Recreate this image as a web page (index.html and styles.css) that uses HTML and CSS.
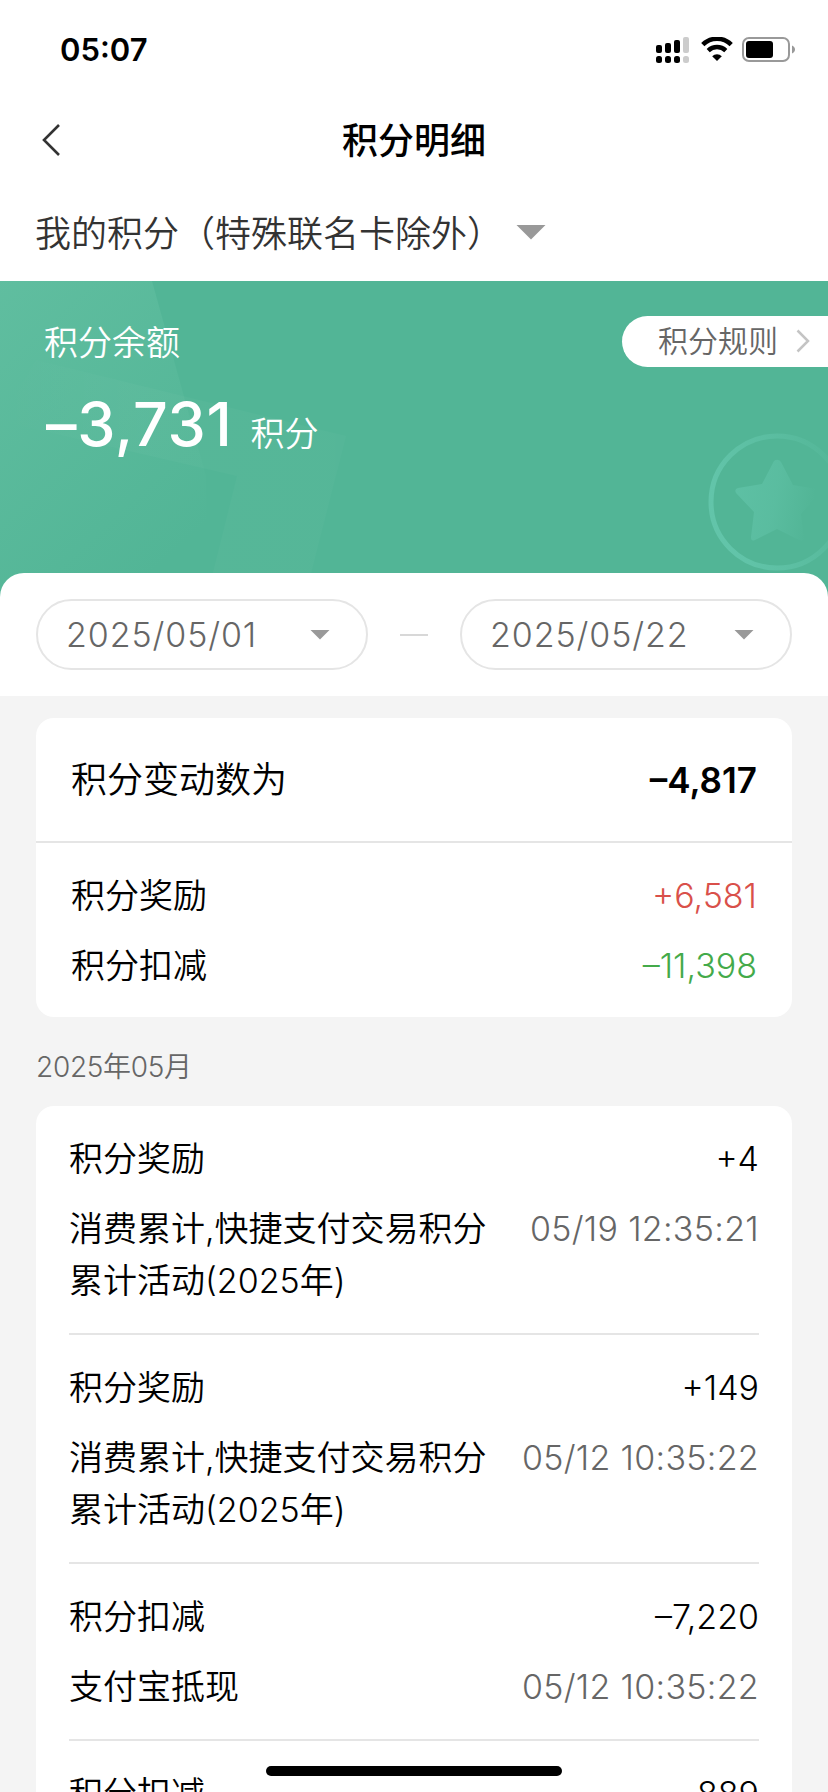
FILE: index.html
```
<!DOCTYPE html>
<html lang="zh-CN">
<head>
  <meta charset="UTF-8">
  <meta name="viewport" content="width=device-width, initial-scale=1">
  <title>积分明细</title>
  <link rel="stylesheet" href="styles.css">
</head>
<body>
  <div class="status-bar">
    <span class="time">05:07</span>
    <div class="status-icons">
      <svg class="signal" width="34" height="26" viewBox="0 0 34 26">
        <rect x="0" y="8" width="6" height="8" rx="2"/>
        <rect x="9" y="6" width="6" height="10" rx="2"/>
        <rect x="18" y="3" width="6" height="13" rx="2"/>
        <rect x="27" y="0" width="6" height="16" rx="2" fill="#ccc"/>
        <rect x="0" y="19" width="6" height="7" rx="2.5"/>
        <rect x="9" y="19" width="6" height="7" rx="2.5"/>
        <rect x="18" y="19" width="6" height="7" rx="2.5"/>
        <rect x="27" y="19" width="6" height="7" rx="2.5" fill="#ccc"/>
      </svg>
      <svg class="wifi" width="32" height="24" viewBox="0 0 32 24">
        <path d="M1.8 7.6a20.3 20.3 0 0 1 28.4 0" fill="none" stroke="#000" stroke-width="4.6"/>
        <path d="M7.2 13.6a12.6 12.6 0 0 1 17.6 0" fill="none" stroke="#000" stroke-width="4.4"/>
        <path d="M16 24l-4.8-4.8a6.8 6.8 0 0 1 9.6 0z"/>
      </svg>
      <svg class="battery" width="53" height="25" viewBox="0 0 53 25">
        <rect x="1" y="1" width="46" height="23" rx="6" fill="none" stroke="#999" stroke-width="2"/>
        <rect x="4" y="4" width="27" height="17" rx="3"/>
        <path d="M50 8.5c4 1.5 4 6.500 0 8z" fill="#999"/>
      </svg>
    </div>
  </div>

  <header class="nav">
    <svg class="back" width="20" height="34" viewBox="0 0 20 34">
      <path d="M18 2L3 17l15 15" fill="none" stroke="#333" stroke-width="2.6"/>
    </svg>
    <h1>积分明细</h1>
  </header>

  <div class="account">
    <span>我的积分（特殊联名卡除外）</span>
    <i class="arrow arrow-big"></i>
  </div>

  <section class="banner">
    <svg class="banner-bg" width="828" height="320" viewBox="0 0 828 320">
      <defs>
        <linearGradient id="beam" x1="0" y1="0" x2="0.6" y2="1">
          <stop offset="0" stop-color="#78cdb0" stop-opacity=".36"/>
          <stop offset="1" stop-color="#78cdb0" stop-opacity="0"/>
        </linearGradient>
        <linearGradient id="ribbon" x1="0" y1="0" x2="1" y2="0">
          <stop offset="0" stop-color="#fff" stop-opacity="0"/>
          <stop offset=".4" stop-color="#fff" stop-opacity=".025"/>
          <stop offset="1" stop-color="#fff" stop-opacity=".02"/>
        </linearGradient>
        <linearGradient id="coin" x1="0" y1="0.3" x2="1" y2="0">
          <stop offset="0" stop-color="#66c8ae" stop-opacity=".8"/>
          <stop offset=".55" stop-color="#66c8ae" stop-opacity=".4"/>
          <stop offset="1" stop-color="#66c8ae" stop-opacity="0"/>
        </linearGradient>
        <linearGradient id="star" x1="0" y1="0" x2="1" y2="0.2">
          <stop offset="0" stop-color="#66c8ae" stop-opacity=".6"/>
          <stop offset=".55" stop-color="#66c8ae" stop-opacity=".4"/>
          <stop offset="1" stop-color="#66c8ae" stop-opacity="0"/>
        </linearGradient>
      </defs>
      <path d="M0 0h152l54 195 3 125H0z" fill="url(#beam)"/>
      <path d="M36 79l310 76-42 165h-98l31-125L0 140z" fill="url(#ribbon)"/>
      <circle cx="777" cy="221" r="66" fill="none" stroke="url(#coin)" stroke-width="5"/>
      <path d="M774 180q4-3 7 1l12 23 24 4q4 3 1 6l-17 19 3 24q-1 4-5 2l-22-11-22 11q-4 2-4-3l3-25-18-19q-2-4 2-5l24-4z" fill="url(#star)"/>
    </svg>
    <div class="balance">
      <p class="balance-label">积分余额</p>
      <p class="balance-value"><strong>–3,731</strong><span>积分</span></p>
    </div>
    <a href="#" class="rules">
      <span>积分规则</span>
      <svg width="14" height="24" viewBox="0 0 14 24">
        <path d="M1.5 1.5L12 12 1.5 22.5" fill="none" stroke="#c4c4c4" stroke-width="2.5"/>
      </svg>
    </a>
  </section>

  <section class="dates">
    <div class="date"><span>2025/05/01</span><i class="arrow"></i></div>
    <i class="dash"></i>
    <div class="date"><span>2025/05/22</span><i class="arrow"></i></div>
  </section>

  <main>
    <section class="card summary">
      <div class="row total"><span>积分变动数为</span><strong>–4,817</strong></div>
      <div class="detail">
        <div class="row"><span>积分奖励</span><span class="plus">+6,581</span></div>
        <div class="row"><span>积分扣减</span><span class="minus">–11,398</span></div>
      </div>
    </section>

    <h2 class="month">2025年05月</h2>

    <ul class="card records">
      <li>
        <div class="row"><span>积分奖励</span><span>+4</span></div>
        <div class="row info"><p>消费累计,快捷支付交易积分累计活动(2025年)</p><time>05/19 12:35:21</time></div>
      </li>
      <li>
        <div class="row"><span>积分奖励</span><span>+149</span></div>
        <div class="row info"><p>消费累计,快捷支付交易积分累计活动(2025年)</p><time>05/12 10:35:22</time></div>
      </li>
      <li>
        <div class="row"><span>积分扣减</span><span>–7,220</span></div>
        <div class="row info"><p>支付宝抵现</p><time>05/12 10:35:22</time></div>
      </li>
      <li>
        <div class="row"><span>积分扣减</span><span>–889</span></div>
      </li>
    </ul>
  </main>

  <div class="home-indicator"></div>
</body>
</html>
```
FILE: styles.css
```
* {
  box-sizing: border-box;
  margin: 0;
  padding: 0;
}

body {
  position: relative;
  height: 1792px;
  overflow: hidden;
  background: #fff;
  color: #000;
  font-family: Inter, "Noto Sans CJK SC", sans-serif;
  font-size: 34px;
  font-weight: 350;
  line-height: 52px;
}

.status-bar {
  display: flex;
  justify-content: space-between;
  height: 94px;
  padding: 24px 33px 0 60px;
}

.time {
  font-size: 31px;
  font-weight: 600;
}

.status-icons {
  display: flex;
  align-items: flex-start;
  padding-top: 13px;
}

.wifi {
  margin: 0 9px 0 11px;
}

.nav {
  display: grid;
  grid-template-columns: 100px 1fr 100px;
  align-items: center;
  height: 92px;
}

.back {
  margin-left: 41px;
}

.nav h1 {
  padding-top: 2px;
  font-size: 36px;
  font-weight: 500;
  text-align: center;
}

.account {
  display: flex;
  align-items: center;
  height: 95px;
  padding-left: 35px;
  color: #333;
  font-size: 36px;
}

.arrow {
  width: 20px;
  height: 10px;
  background: #999;
  clip-path: polygon(0 0, 100% 0, 50% 100%);
}

.arrow-big {
  width: 30px;
  height: 15px;
  margin: 0 0 3px 13px;
}

.banner {
  position: relative;
  display: flex;
  justify-content: space-between;
  align-items: flex-start;
  height: 320px;
  padding-top: 35px;
  background: #52b596;
  color: #fff;
}

.banner-bg {
  position: absolute;
  top: 0;
  left: 0;
}

.balance {
  position: relative;
  padding: 1px 0 0 44px;
}

.balance-value {
  display: flex;
  align-items: baseline;
  margin-top: 29px;
}

.balance-value strong {
  margin: 0 18px 0 2px;
  font-size: 61px;
  font-weight: 550;
  letter-spacing: 0.7px;
}

.rules {
  position: relative;
  display: flex;
  justify-content: space-between;
  align-items: center;
  width: 206px;
  height: 51px;
  padding: 0 18px 1px 36px;
  border-radius: 26px 0 0 26px;
  background: #fff;
  color: #666;
  font-size: 30px;
  text-decoration: none;
}

/* overlaps the lower edge of the banner */
.dates {
  position: relative;
  display: flex;
  justify-content: space-between;
  align-items: center;
  height: 123px;
  margin-top: -28px;
  padding: 0 36px;
  border-radius: 24px 24px 0 0;
  background: #fff;
}

.date {
  display: flex;
  justify-content: space-between;
  align-items: center;
  width: 332px;
  height: 71px;
  padding: 0 36px 0 28px;
  border: 2px solid #e5e5e5;
  border-radius: 36px;
  color: #666;
  letter-spacing: 0.9px;
}

.dash {
  width: 28px;
  height: 2px;
  background: #d8d8d8;
}

main {
  height: 1096px;
  padding: 22px 36px 0;
  background: #f4f4f4;
}

.card {
  border-radius: 18px;
  background: #fff;
}

.row {
  display: flex;
  justify-content: space-between;
}

.summary {
  height: 299px;
}

.total {
  align-items: center;
  height: 125px;
  padding: 0 35px;
  border-bottom: 2px solid #e5e5e5;
  font-size: 36px;
}

.total strong {
  font-size: 35px;
  font-weight: 600;
}

.detail {
  display: grid;
  gap: 18px;
  padding: 27px 35px;
}

.plus {
  color: #d9504a;
}

.minus {
  color: #44aa4a;
}

.month {
  margin-top: 24px;
  color: #666;
  font-size: 28px;
  font-weight: 350;
  letter-spacing: -0.3px;
}

.records {
  margin-top: 13px;
  padding: 0 33px;
  list-style: none;
}

.records li {
  padding: 27px 0 26px;
  border-bottom: 2px solid #e5e5e5;
}

.info {
  margin-top: 18px;
}

.info p {
  width: 422px;
}

.info time {
  color: #666;
  letter-spacing: 0.3px;
}

.home-indicator {
  position: absolute;
  bottom: 16px;
  left: 266px;
  width: 296px;
  height: 10px;
  border-radius: 5px;
  background: #000;
}
```
